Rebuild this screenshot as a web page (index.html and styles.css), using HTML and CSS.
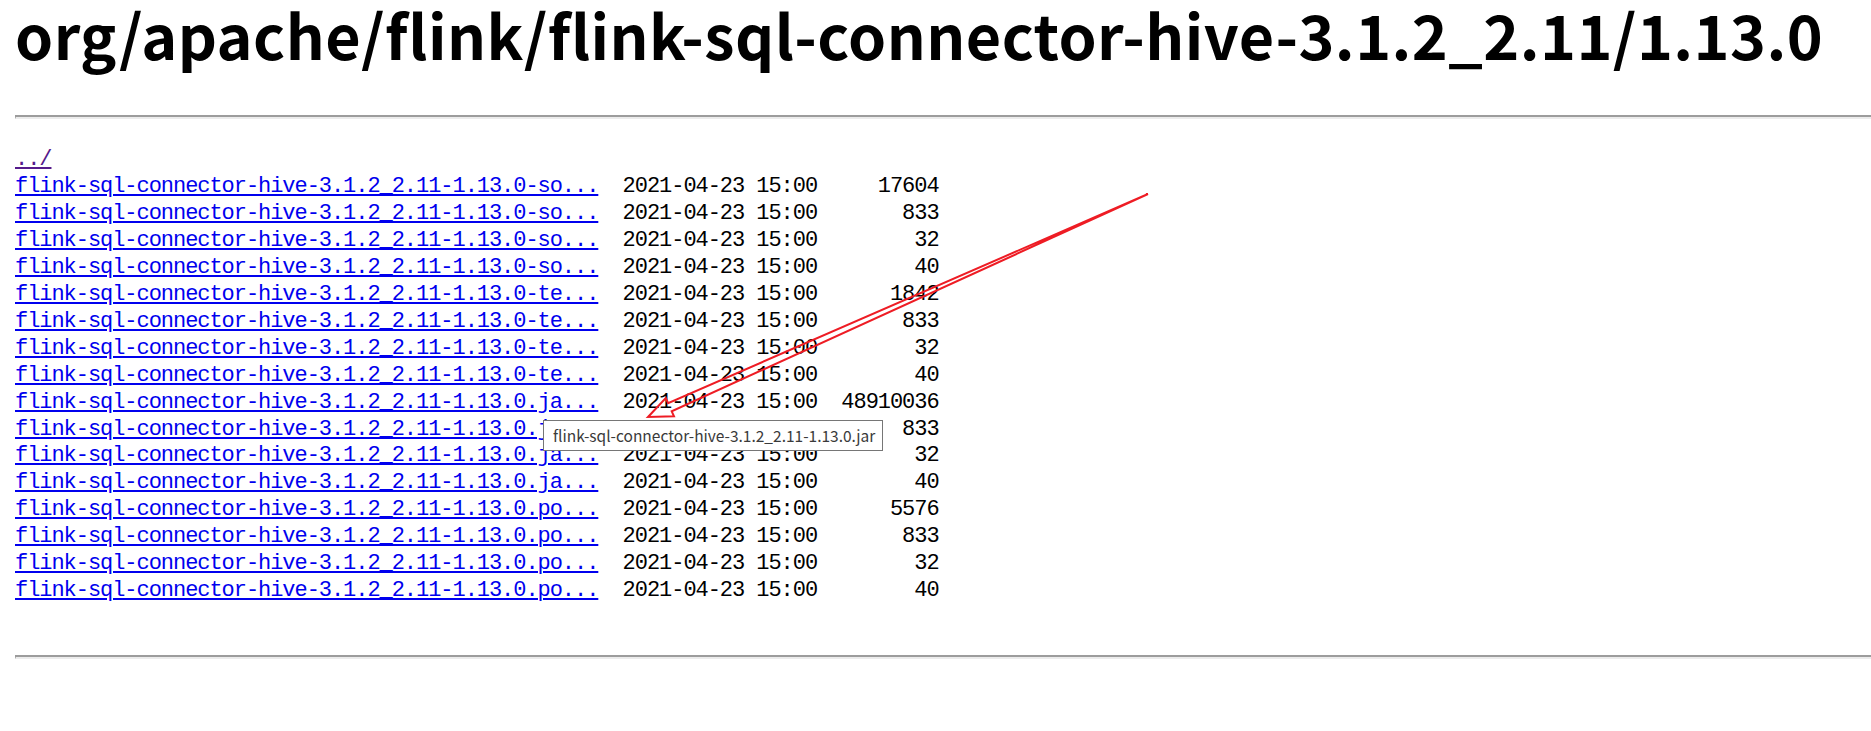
FILE: index.html
```html
<!DOCTYPE html>
<html>
<head>
<meta charset="utf-8">
<title>Central Repository: org/apache/flink/flink-sql-connector-hive-3.1.2_2.11/1.13.0</title>
<link rel="stylesheet" href="styles.css">
</head>
<body>
<header class="page-head">
<h1 class="title">org/apache/flink/flink-sql-connector-hive-3.1.2_2.11/1.13.0</h1>
</header>
<hr class="rule rule-top">
<main class="listing">
<pre class="files"><a class="visited" href="../">../</a>
<a href="flink-sql-connector-hive-3.1.2_2.11-1.13.0-sources.jar">flink-sql-connector-hive-3.1.2_2.11-1.13.0-so...</a>  2021-04-23 15:00     17604
<a href="flink-sql-connector-hive-3.1.2_2.11-1.13.0-sources.jar.asc">flink-sql-connector-hive-3.1.2_2.11-1.13.0-so...</a>  2021-04-23 15:00       833
<a href="flink-sql-connector-hive-3.1.2_2.11-1.13.0-sources.jar.md5">flink-sql-connector-hive-3.1.2_2.11-1.13.0-so...</a>  2021-04-23 15:00        32
<a href="flink-sql-connector-hive-3.1.2_2.11-1.13.0-sources.jar.sha1">flink-sql-connector-hive-3.1.2_2.11-1.13.0-so...</a>  2021-04-23 15:00        40
<a href="flink-sql-connector-hive-3.1.2_2.11-1.13.0-tests.jar">flink-sql-connector-hive-3.1.2_2.11-1.13.0-te...</a>  2021-04-23 15:00      1842
<a href="flink-sql-connector-hive-3.1.2_2.11-1.13.0-tests.jar.asc">flink-sql-connector-hive-3.1.2_2.11-1.13.0-te...</a>  2021-04-23 15:00       833
<a href="flink-sql-connector-hive-3.1.2_2.11-1.13.0-tests.jar.md5">flink-sql-connector-hive-3.1.2_2.11-1.13.0-te...</a>  2021-04-23 15:00        32
<a href="flink-sql-connector-hive-3.1.2_2.11-1.13.0-tests.jar.sha1">flink-sql-connector-hive-3.1.2_2.11-1.13.0-te...</a>  2021-04-23 15:00        40
<a href="flink-sql-connector-hive-3.1.2_2.11-1.13.0.jar">flink-sql-connector-hive-3.1.2_2.11-1.13.0.ja...</a>  2021-04-23 15:00  48910036
<a href="flink-sql-connector-hive-3.1.2_2.11-1.13.0.jar.asc">flink-sql-connector-hive-3.1.2_2.11-1.13.0.ja...</a>  2021-04-23 15:00       833
<a href="flink-sql-connector-hive-3.1.2_2.11-1.13.0.jar.md5">flink-sql-connector-hive-3.1.2_2.11-1.13.0.ja...</a>  2021-04-23 15:00        32
<a href="flink-sql-connector-hive-3.1.2_2.11-1.13.0.jar.sha1">flink-sql-connector-hive-3.1.2_2.11-1.13.0.ja...</a>  2021-04-23 15:00        40
<a href="flink-sql-connector-hive-3.1.2_2.11-1.13.0.pom">flink-sql-connector-hive-3.1.2_2.11-1.13.0.po...</a>  2021-04-23 15:00      5576
<a href="flink-sql-connector-hive-3.1.2_2.11-1.13.0.pom.asc">flink-sql-connector-hive-3.1.2_2.11-1.13.0.po...</a>  2021-04-23 15:00       833
<a href="flink-sql-connector-hive-3.1.2_2.11-1.13.0.pom.md5">flink-sql-connector-hive-3.1.2_2.11-1.13.0.po...</a>  2021-04-23 15:00        32
<a href="flink-sql-connector-hive-3.1.2_2.11-1.13.0.pom.sha1">flink-sql-connector-hive-3.1.2_2.11-1.13.0.po...</a>  2021-04-23 15:00        40
</pre>
</main>
<hr class="rule rule-bottom">

<div class="tooltip">flink-sql-connector-hive-3.1.2_2.11-1.13.0.jar</div>

<svg class="annotation" width="1871" height="731" viewBox="0 0 1871 731" xmlns="http://www.w3.org/2000/svg">
  <polygon points="1148,194 671.7,411.3 674.0,416.3 648,417 665.8,398.1 668.1,403.1" fill="none" stroke="#ee1c24" stroke-width="2" stroke-linejoin="miter"/>
</svg>
</body>
</html>
```

FILE: styles.css
```css
html, body {
  background: #ffffff;
}

body {
  margin: 0 0 0 15px;
  padding: 0;
  color: #000000;
  overflow: hidden;
  position: relative;
  width: 1856px;
  height: 731px;
}

.page-head {
  display: block;
}

.title {
  margin: 0;
  font-family: "Noto Sans CJK SC", "Noto Sans", sans-serif;
  font-weight: 700;
  font-size: 61px;
  line-height: 68px;
  letter-spacing: 0.44px;
  white-space: nowrap;
  color: #000000;
}

.rule {
  display: block;
  height: 0;
  margin: 0;
  border: 0;
  border-top: 2px solid #9c9c9c;
  border-bottom: 2px solid #ececec;
  border-left: 1px solid #9c9c9c;
}

.rule-top {
  margin-top: 47px;
}

.listing {
  display: block;
}

.files {
  margin: 28px 0 0 0;
  font-family: "Liberation Mono", "DejaVu Sans Mono", monospace;
  font-size: 22px;
  letter-spacing: -1.05px;
  line-height: 26.95px;
  color: #000000;
}

.files a {
  color: #0000ee;
  text-decoration: underline;
  text-decoration-thickness: 2px;
  text-underline-offset: 2px;
}

.files a.visited {
  color: #551a8b;
}

.rule-bottom {
  margin-top: 50px;
}

.tooltip {
  position: absolute;
  left: 528px;
  top: 420px;
  width: 340px;
  height: 31px;
  box-sizing: border-box;
  padding: 0 0 0 9px;
  border: 1px solid #767676;
  background: #ffffff;
  color: #3a3a3a;
  font-family: "Noto Sans CJK SC", "Noto Sans", sans-serif;
  font-size: 15.5px;
  line-height: 29px;
  white-space: nowrap;
}

.annotation {
  position: absolute;
  left: -15px;
  top: 0;
  pointer-events: none;
}
```
